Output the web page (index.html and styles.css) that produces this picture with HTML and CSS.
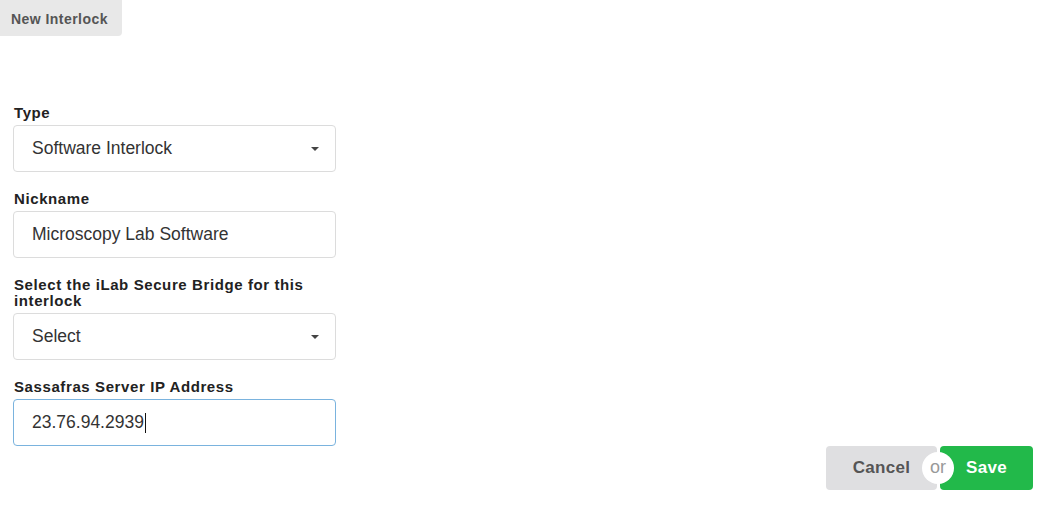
FILE: index.html
```html
<!DOCTYPE html>
<html lang="en">
<head>
<meta charset="utf-8">
<title>New Interlock</title>
<link rel="stylesheet" href="styles.css">
</head>
<body>
<div class="page">
  <div class="tab">New Interlock</div>
  <form class="form">
    <div class="group">
      <label class="label">Type</label>
      <div class="field select"><span>Software Interlock</span><span class="caret-down"></span></div>
    </div>
    <div class="group">
      <label class="label">Nickname</label>
      <div class="field"><span>Microscopy Lab Software</span></div>
    </div>
    <div class="group">
      <label class="label">Select the iLab Secure Bridge for this interlock</label>
      <div class="field select"><span>Select</span><span class="caret-down"></span></div>
    </div>
    <div class="group">
      <label class="label">Sassafras Server IP Address</label>
      <div class="field focused"><span>23.76.94.2939</span><span class="cursor"></span></div>
    </div>
  </form>
  <div class="actions">
    <button type="button" class="btn cancel">Cancel</button>
    <span class="or">or</span>
    <button type="button" class="btn save">Save</button>
  </div>
</div>
</body>
</html>
```
FILE: styles.css
```css
* { box-sizing: border-box; }
html, body { margin: 0; padding: 0; background: #fff; }
body { font-family: "Liberation Sans", Arial, sans-serif; color: #222; }
.page { display: flex; flex-direction: column; width: 1062px; height: 506px; }
.tab {
  align-self: flex-start;
  width: 122px;
  height: 36px;
  padding: 11px 0 0 11px;
  background: #e8e8e8;
  border-bottom-right-radius: 4px;
  color: #555;
  font-size: 14px;
  font-weight: bold;
  line-height: 16px;
  letter-spacing: 0.45px;
}
.form { margin: 68px 0 0 13px; width: 323px; display: flex; flex-direction: column; gap: 18px; }
.group { display: flex; flex-direction: column; gap: 4px; }
.label { display: block; padding: 1px 0 0 1px; font-size: 15px; font-weight: bold; line-height: 16px; color: #222; letter-spacing: 0.6px; }
.field {
  height: 47px;
  border: 1px solid #dcdcdc;
  border-radius: 4px;
  padding: 0 18px;
  display: flex;
  align-items: center;
  font-size: 17.5px;
  color: #333;
  background: #fff;
}
.field.select { justify-content: space-between; padding-right: 16px; }
.field.focused { border-color: #7ab3de; }
.caret-down {
  width: 0; height: 0;
  border-left: 4.5px solid transparent;
  border-right: 4.5px solid transparent;
  border-top: 4.5px solid #444;
}
.cursor { width: 1px; height: 20px; background: #111; margin-left: 1px; }
.actions { display: flex; justify-content: flex-end; align-items: center; margin: 0 29px 0 0; position: relative; }
.btn {
  height: 44px;
  border: 0;
  border-radius: 4px;
  font-family: "Liberation Sans", Arial, sans-serif;
  font-size: 17px;
  font-weight: bold;
  letter-spacing: 0.3px;
  padding: 0;
}
.cancel { width: 111px; background: #dfdfe1; color: #555; margin-right: 3px; }
.save { width: 93px; background: #22b94a; color: #fff; }
.or {
  position: absolute;
  right: 79px;
  top: 6px;
  width: 32px;
  height: 32px;
  border-radius: 50%;
  background: #fff;
  color: #999;
  font-size: 18px;
  display: flex;
  align-items: center;
  justify-content: center;
  padding-bottom: 2px;
}
```
